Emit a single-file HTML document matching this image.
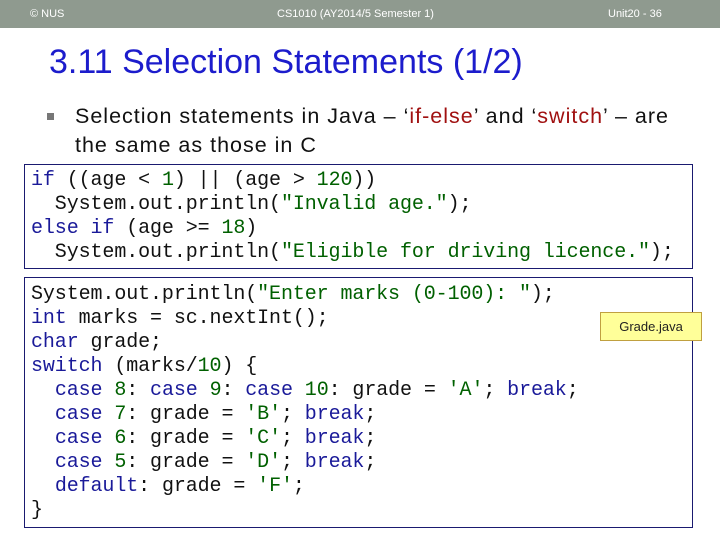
<!DOCTYPE html>
<html><head><style>
body{margin:0;width:720px;height:540px;background:#fff;position:relative;overflow:hidden;font-family:"Liberation Sans",sans-serif}
.hdr{position:absolute;left:0;top:0;width:720px;height:28px;background:#8f9a8f;color:#fff;font-size:11px}
.hdr span{position:absolute;top:8px}
h1{position:absolute;left:49px;top:43px;margin:0;font-weight:normal;font-size:34px;color:#1c1ccc;letter-spacing:0px}
.bul{position:absolute;left:75px;top:102px;font-size:21.5px;line-height:29px;color:#111;width:640px;letter-spacing:1px;white-space:nowrap}
.bul .sq{position:absolute;left:-28px;top:11px;width:7px;height:7px;background:#777}
.r{color:#a01010}
.box{position:absolute;left:24px;width:669px;border:1.5px solid #1a1a70;box-sizing:border-box}
pre{margin:0;font-family:"Liberation Mono",monospace;font-size:20px;line-height:24px;color:#111;position:absolute;left:6px;letter-spacing:-0.1px}
.k{color:#1a1a99}.s{color:#006000}
.tag{position:absolute;left:600px;top:312px;width:102px;height:29px;background:#ffff99;border:1px solid #c0a040;box-sizing:border-box;font-size:13px;text-align:center;line-height:27px;color:#222}
</style></head><body>
<div class="hdr"><span style="left:30px">© NUS</span><span style="left:277px">CS1010 (AY2014/5 Semester 1)</span><span style="left:608px">Unit20 - 36</span></div>
<h1>3.11 Selection Statements (1/2)</h1>
<div class="bul"><div class="sq"></div>Selection statements in Java – ‘<span class="r">if-else</span>’ and ‘<span class="r">switch</span>’ – are<br>the same as those in C</div>
<div class="box" style="top:164px;height:105px"><pre style="top:4px"><span class="k">if</span> ((age &lt; <span class="s">1</span>) || (age &gt; <span class="s">120</span>))
  System.out.println(<span class="s">"Invalid age."</span>);
<span class="k">else if</span> (age &gt;= <span class="s">18</span>)
  System.out.println(<span class="s">"Eligible for driving licence."</span>);</pre></div>
<div class="box" style="top:277px;height:251px"><pre style="top:5px">System.out.println(<span class="s">"Enter marks (0-100): "</span>);
<span class="k">int</span> marks = sc.nextInt();
<span class="k">char</span> grade;
<span class="k">switch</span> (marks/<span class="s">10</span>) {
  <span class="k">case</span> <span class="s">8</span>: <span class="k">case</span> <span class="s">9</span>: <span class="k">case</span> <span class="s">10</span>: grade = <span class="s">'A'</span>; <span class="k">break</span>;
  <span class="k">case</span> <span class="s">7</span>: grade = <span class="s">'B'</span>; <span class="k">break</span>;
  <span class="k">case</span> <span class="s">6</span>: grade = <span class="s">'C'</span>; <span class="k">break</span>;
  <span class="k">case</span> <span class="s">5</span>: grade = <span class="s">'D'</span>; <span class="k">break</span>;
  <span class="k">default</span>: grade = <span class="s">'F'</span>;
}</pre></div>
<div class="tag">Grade.java</div>
</body></html>
